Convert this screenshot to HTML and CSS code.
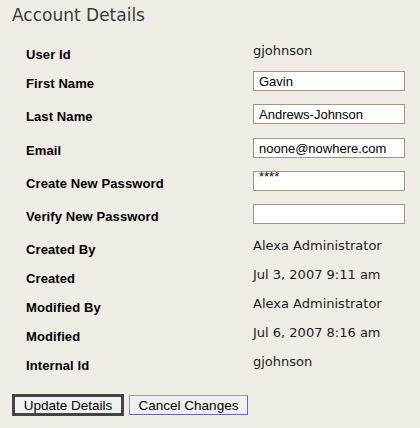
FILE: index.html
```html
<!DOCTYPE html>
<html>
<head>
<meta charset="utf-8">
<title>Account Details</title>
<link rel="stylesheet" href="styles.css">
</head>
<body>
<div class="page">
  <h1 class="title">Account Details</h1>
  <div class="form">
    <div class="row text"><div class="label">User Id</div><div class="value">gjohnson</div></div>
    <div class="row field"><label class="label" for="fn">First Name</label><input id="fn" class="input" type="text" value="Gavin"></div>
    <div class="row field"><label class="label" for="ln">Last Name</label><input id="ln" class="input" type="text" value="Andrews-Johnson"></div>
    <div class="row field"><label class="label" for="em">Email</label><input id="em" class="input" type="text" value="noone@nowhere.com"></div>
    <div class="row field"><label class="label" for="pw">Create New Password</label><input id="pw" class="input pw" type="text" value="****"></div>
    <div class="row field"><label class="label" for="vp">Verify New Password</label><input id="vp" class="input" type="text" value=""></div>
    <div class="row text"><div class="label">Created By</div><div class="value">Alexa Administrator</div></div>
    <div class="row text"><div class="label">Created</div><div class="value">Jul 3, 2007 9:11 am</div></div>
    <div class="row text"><div class="label">Modified By</div><div class="value">Alexa Administrator</div></div>
    <div class="row text"><div class="label">Modified</div><div class="value">Jul 6, 2007 8:16 am</div></div>
    <div class="row text"><div class="label">Internal Id</div><div class="value">gjohnson</div></div>
  </div>
  <div class="actions">
    <button class="btn btn-default" type="button">Update Details</button>
    <button class="btn btn-cancel" type="button">Cancel Changes</button>
  </div>
</div>
</body>
</html>
```
FILE: styles.css
```css
html, body {
  margin: 0;
  padding: 0;
  background: #efece5;
}

.page {
  padding-top: 5px;
}

.title {
  margin: 0 0 0 12px;
  font: normal 17px/20px "DejaVu Sans", Verdana, sans-serif;
  color: #3a3a3a;
}

.form {
  margin-top: 15px;
  padding-left: 26px;
}

.row {
  display: grid;
  grid-template-columns: 227px 152px;
  align-items: start;
}

.row.text {
  height: 29px;
}

.row.field {
  height: 33.25px;
}

.label {
  font: bold 13px/29px "Liberation Sans", Arial, sans-serif;
  color: #000000;
  letter-spacing: 0.1px;
}

.value {
  font: 13px/22px "DejaVu Sans", Verdana, sans-serif;
  color: #222222;
}

.input {
  margin: 2px 0 0 0;
  box-sizing: border-box;
  width: 152px;
  height: 20px;
  border: 1px solid #9f9589;
  padding: 1px 4px 0 5px;
  background: #ffffff;
  font: 13px "Liberation Sans", Arial, sans-serif;
  color: #000000;
  outline: none;
  border-radius: 0;
}

.input.pw {
  padding: 0 4px 8px 5px;
}

.actions {
  display: flex;
  align-items: center;
  gap: 5px;
  margin-top: 14px;
  padding-left: 12px;
}

.btn {
  box-sizing: border-box;
  margin: 0;
  padding: 0;
  background: #f0f0f0;
  color: #000000;
  font: 13.5px "Liberation Sans", Arial, sans-serif;
  border-radius: 0;
}

.btn-default {
  width: 112px;
  height: 22px;
  border: 3px solid #444444;
}

.btn-cancel {
  width: 119px;
  height: 20px;
  border: 1px solid;
  border-color: #a09a90 #5b6ea5 #5b6ea5 #a09a90;
}
```
